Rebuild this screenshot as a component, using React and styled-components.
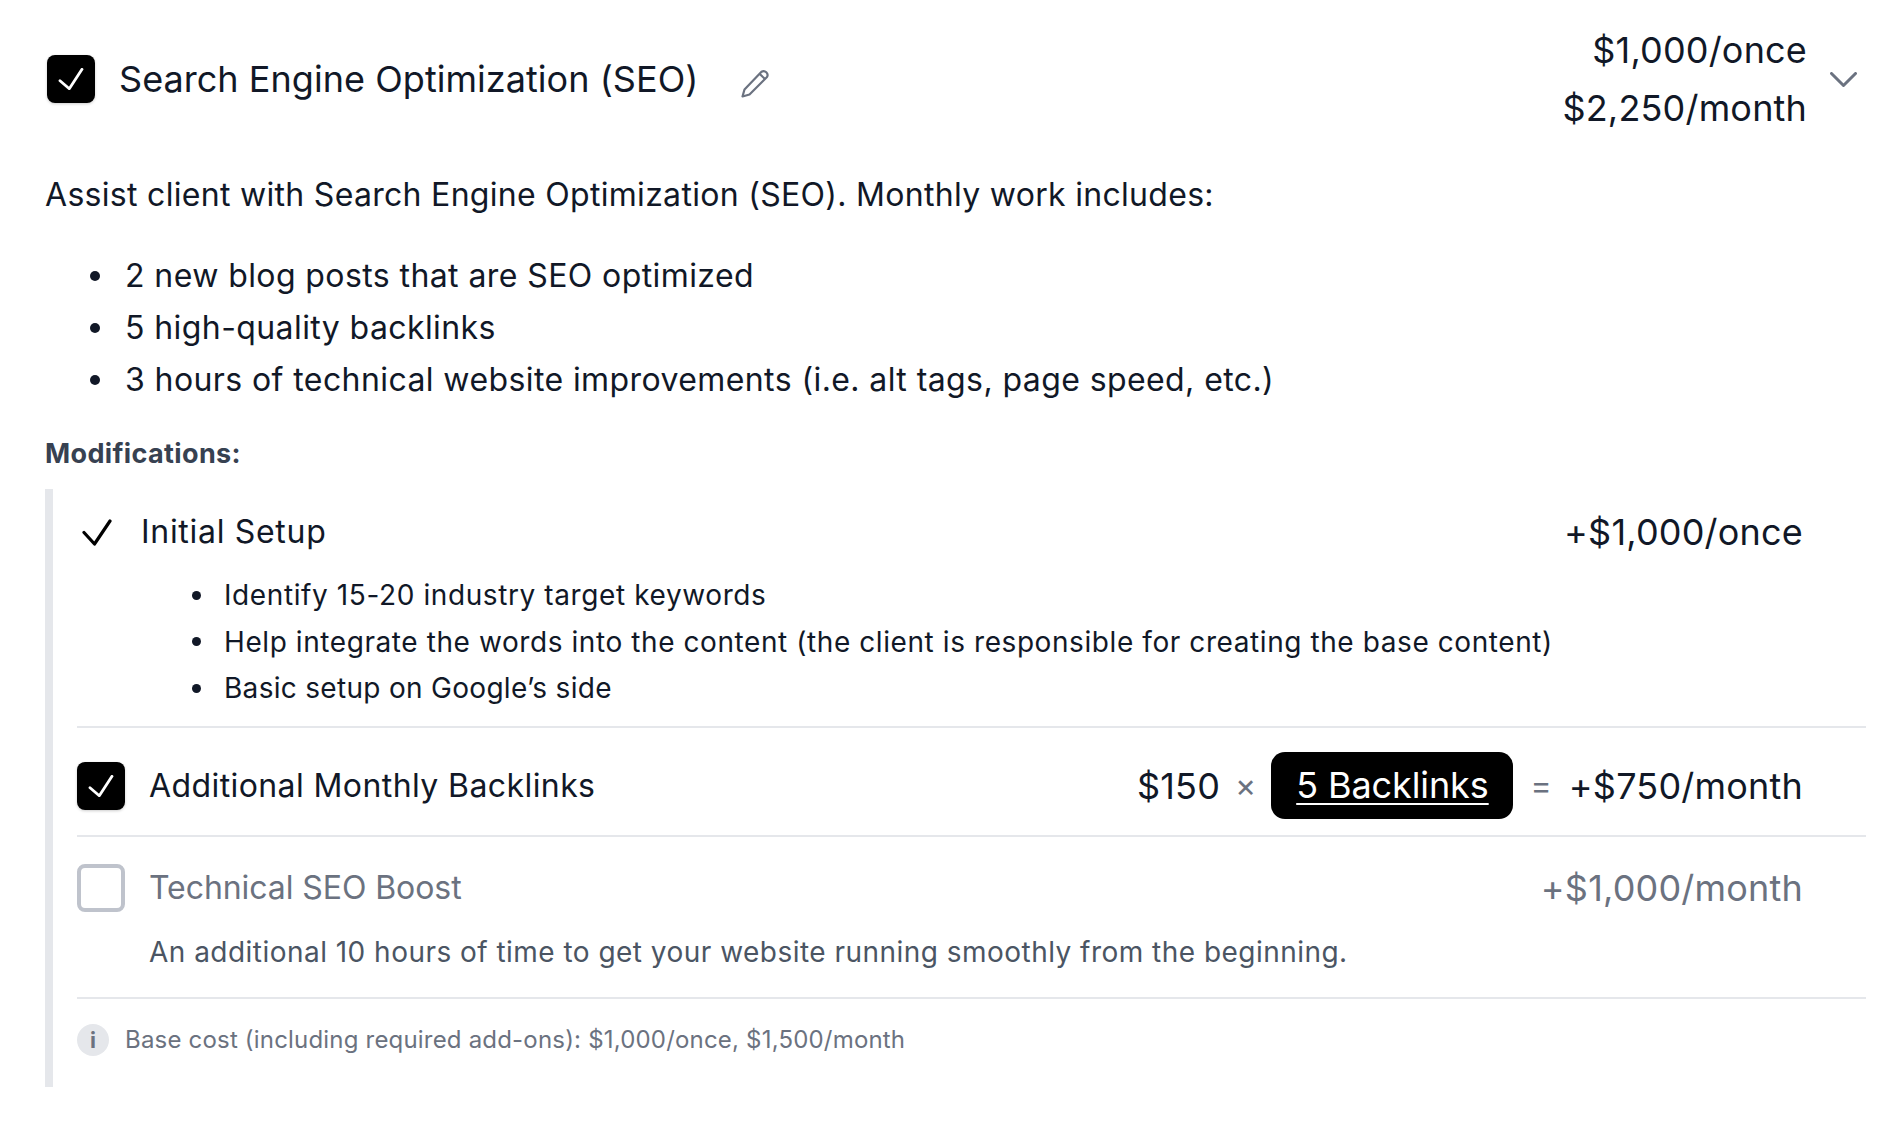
import React from "react";
import styled, { createGlobalStyle } from "styled-components";

const GlobalStyle = createGlobalStyle`
  html, body {
    margin: 0;
    padding: 0;
    background: #ffffff;
  }
  body {
    font-family: Inter, "Liberation Sans", sans-serif;
    color: #111827;
  }
`;

const Page = styled.div`
  padding: 21px 26px 40px 45px;
`;

const Header = styled.div`
  display: flex;
  align-items: center;
  padding-left: 2px;
`;

const Checkbox = styled.span`
  flex: none;
  width: 48px;
  height: 48px;
  box-sizing: border-box;
  border-radius: 8px;
  display: flex;
  align-items: center;
  justify-content: center;
  background: ${(p) => (p.$checked ? "#000000" : "#ffffff")};
  border: ${(p) => (p.$checked ? "none" : "4px solid #bfc3cc")};
  box-shadow: ${(p) => (p.$checked ? "0 1px 3px rgba(0,0,0,0.2)" : "none")};
`;

const Title = styled.div`
  margin-left: 24px;
  font-size: 36px;
  line-height: 58px;
  letter-spacing: 0.04px;
  color: #111827;
`;

const EditIcon = styled.svg`
  margin: 0 0 0 42px;
  position: relative;
  top: 4px;
`;

const Prices = styled.div`
  margin-left: auto;
  text-align: right;
  font-size: 36px;
  line-height: 58px;
  letter-spacing: 0.18px;
  color: #111827;
`;

const Chevron = styled.svg`
  margin: 0 9px 0 23px;
`;

const Description = styled.p`
  margin: 32px 0 0;
  font-size: 32px;
  line-height: 52px;
  letter-spacing: 0.3px;
  color: #111827;
`;

const MainList = styled.ul`
  margin: 29px 0 0;
  padding: 0 0 0 45px;
  list-style: none;
  font-size: 32px;
  line-height: 52px;
  letter-spacing: 0.41px;
  color: #111827;
`;

const MainItem = styled.li`
  display: flex;
  align-items: center;

  &::before {
    content: "";
    flex: none;
    width: 10px;
    height: 10px;
    margin-right: 25px;
    border-radius: 50%;
    background: #111827;
  }
`;

const Heading = styled.div`
  margin-top: 28px;
  font-size: 27px;
  line-height: 40px;
  font-weight: 700;
  letter-spacing: 0.36px;
  color: #374151;
`;

const ModBlock = styled.div`
  margin-top: 15px;
  border-left: 8px solid #e5e7eb;
  padding-left: 24px;
`;

const Row = styled.div`
  display: flex;
  align-items: center;
  min-height: 58px;
`;

const ModSection = styled.div`
  padding: ${(p) => p.$padding};
  border-bottom: ${(p) => (p.$last ? "none" : "2px solid #e5e7eb")};
`;

const BareCheck = styled.svg`
  flex: none;
  margin-left: 5px;
`;

const RowLabel = styled.div`
  margin-left: ${(p) => p.$gap}px;
  font-size: 32px;
  line-height: 58px;
  letter-spacing: ${(p) => p.$tracking}px;
  color: ${(p) => (p.$muted ? "#6b7280" : "#111827")};
`;

const RowPrice = styled.div`
  margin-left: auto;
  margin-right: 63px;
  display: flex;
  align-items: center;
  font-size: 36px;
  line-height: 58px;
  letter-spacing: 0.2px;
  color: ${(p) => (p.$muted ? "#6b7280" : "#111827")};
`;

const Operator = styled.span`
  font-size: 32px;
  color: #6b7280;
  margin: 0 ${(p) => p.$space}px;
`;

const QuantityButton = styled.span`
  display: inline-flex;
  align-items: center;
  justify-content: center;
  width: 242px;
  height: 67px;
  margin-bottom: 2px;
  border-radius: 14px;
  background: #000000;
  color: #ffffff;
  letter-spacing: -0.1px;
  text-decoration: underline;
  text-decoration-thickness: 2px;
  text-underline-offset: 5px;
`;

const SubList = styled.ul`
  margin: 11px 0 0;
  padding: 0 0 0 115px;
  list-style: none;
  font-size: 28px;
  line-height: 46.5px;
  color: #111827;
`;

const SubItem = styled.li`
  display: flex;
  align-items: center;
  letter-spacing: ${(p) => p.$tracking}px;

  &::before {
    content: "";
    flex: none;
    width: 9px;
    height: 9px;
    margin-right: 23px;
    border-radius: 50%;
    background: #111827;
  }
`;

const Note = styled.p`
  margin: 12px 0 0 72px;
  font-size: 28px;
  line-height: 46px;
  letter-spacing: 0.47px;
  color: #4b5563;
`;

const Footer = styled.div`
  display: flex;
  align-items: center;
  font-size: 24px;
  line-height: 32px;
  letter-spacing: 0.19px;
  color: #6b7280;
`;

const InfoBadge = styled.span`
  flex: none;
  width: 32px;
  height: 32px;
  border-radius: 50%;
  margin-right: 16px;
  background: #e5e7eb;
  color: #6b7280;
  font-size: 22px;
  font-weight: 700;
  display: flex;
  align-items: center;
  justify-content: center;
`;

const WhiteCheck = () => (
  <svg width="26" height="22" viewBox="0 0 26 22" fill="none">
    <path d="M2 12.7L11.3 20.7L24 1.3" stroke="#fff" strokeWidth="2.8" strokeLinecap="round" strokeLinejoin="round" />
  </svg>
);

const App = () => (
  <Page>
    <GlobalStyle />
    <Header>
      <Checkbox $checked>
        <WhiteCheck />
      </Checkbox>
      <Title>Search Engine Optimization (SEO)</Title>
      <EditIcon width="30" height="30" viewBox="0 0 30 30" fill="none" stroke="#6b7280" strokeWidth="2.2" strokeLinejoin="round">
        <path d="M2.5 28.5L4.5 21.5L21.5 3.8A3.9 3.9 0 0 1 27 9L9.5 26.5L2.5 28.5Z" />
        <path d="M19.5 5.8L25 11" />
      </EditIcon>
      <Prices>
        <div>$1,000/once</div>
        <div>$2,250/month</div>
      </Prices>
      <Chevron width="27" height="15" viewBox="0 0 27 15" fill="none" stroke="#6b7280" strokeWidth="3" strokeLinecap="round" strokeLinejoin="round">
        <path d="M1.5 1.5L13.5 13.5L25.5 1.5" />
      </Chevron>
    </Header>

    <Description>Assist client with Search Engine Optimization (SEO). Monthly work includes:</Description>
    <MainList>
      <MainItem>2 new blog posts that are SEO optimized</MainItem>
      <MainItem>5 high-quality backlinks</MainItem>
      <MainItem>3 hours of technical website improvements (i.e. alt tags, page speed, etc.)</MainItem>
    </MainList>

    <Heading>Modifications:</Heading>
    <ModBlock>
      <ModSection $padding="14px 0 14px">
        <Row>
          <BareCheck width="30" height="28" viewBox="0 0 30 28" fill="none">
            <path d="M2 14.5L12.5 26L28 3" stroke="#000" strokeWidth="3.2" strokeLinecap="round" strokeLinejoin="round" />
          </BareCheck>
          <RowLabel $gap={29} $tracking={0.7}>Initial Setup</RowLabel>
          <RowPrice>+$1,000/once</RowPrice>
        </Row>
        <SubList>
          <SubItem $tracking={0.6}>Identify 15-20 industry target keywords</SubItem>
          <SubItem $tracking={0.58}>Help integrate the words into the content (the client is responsible for creating the base content)</SubItem>
          <SubItem $tracking={0.3}>Basic setup on Google’s side</SubItem>
        </SubList>
      </ModSection>

      <ModSection $padding="24px 0 14px">
        <Row>
          <Checkbox $checked>
            <WhiteCheck />
          </Checkbox>
          <RowLabel $gap={24} $tracking={0.41}>Additional Monthly Backlinks</RowLabel>
          <RowPrice>
            $150
            <Operator $space={15}>×</Operator>
            <QuantityButton>5 Backlinks</QuantityButton>
            <Operator $space={17}>=</Operator>
            +$750/month
          </RowPrice>
        </Row>
      </ModSection>

      <ModSection $padding="22px 0 22px">
        <Row>
          <Checkbox />
          <RowLabel $gap={24} $tracking={-0.07} $muted>Technical SEO Boost</RowLabel>
          <RowPrice $muted>+$1,000/month</RowPrice>
        </Row>
        <Note>An additional 10 hours of time to get your website running smoothly from the beginning.</Note>
      </ModSection>

      <ModSection $padding="25px 0 31px" $last>
        <Footer>
          <InfoBadge>i</InfoBadge>
          Base cost (including required add-ons): $1,000/once, $1,500/month
        </Footer>
      </ModSection>
    </ModBlock>
  </Page>
);

export default App;
